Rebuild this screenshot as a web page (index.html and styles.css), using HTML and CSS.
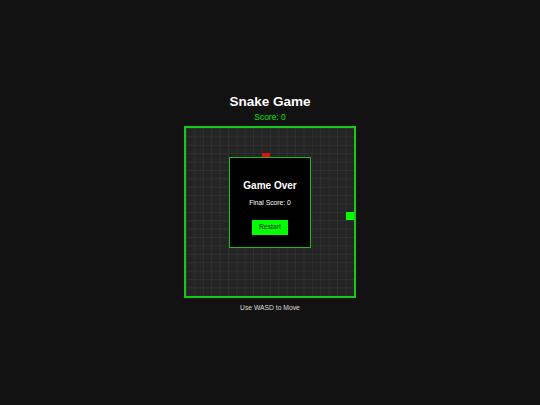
FILE: index.html
```html
<!DOCTYPE html>
<html>
<head>
<meta charset="utf-8">
<link rel="stylesheet" href="styles.css">
</head>
<body>
<div class="app">
  <h1 class="title">Snake Game</h1>
  <div class="score">Score: 0</div>
  <div class="board">
    <div class="cell food" style="left:75.6px;top:25.2px"></div>
    <div class="cell snake" style="left:159.6px;top:84px"></div>
    <div class="overlay">
      <h2 class="over-title">Game Over</h2>
      <p class="final">Final Score: 0</p>
      <button class="restart">Restart</button>
    </div>
  </div>
  <p class="hint">Use WASD to Move</p>
</div>
</body>
</html>
```
FILE: styles.css
```css
html, body {
  margin: 0;
  padding: 0;
  background: #121212;
  width: 540px;
  height: 405px;
  overflow: hidden;
}
.app {
  padding-top: 94px;
  display: flex;
  flex-direction: column;
  align-items: center;
  font-family: "Liberation Sans", Arial, sans-serif;
  color: #fff;
}
.title {
  margin: 0;
  font-size: 13.5px;
  line-height: 16px;
  font-weight: bold;
  color: #fff;
}
.score {
  margin-top: 2.4px;
  font-size: 8.44px;
  line-height: 10px;
  color: #00e600;
}
.board {
  position: relative;
  margin-top: 3.6px;
  width: 168px;
  height: 168px;
  border: 2px solid #18c818;
  background-color: #242424;
  background-image:
    linear-gradient(to right, #303030 1px, transparent 1px),
    linear-gradient(to bottom, #303030 1px, transparent 1px);
  background-size: 8.4px 8.4px;
}
.cell {
  position: absolute;
  width: 8.4px;
  height: 8.4px;
}
.food { background: #e01010; }
.snake { background: #00ff00; }
.overlay {
  position: absolute;
  left: 43px;
  top: 29px;
  width: 80px;
  box-sizing: content-box;
  border: 1px solid #1fb81f;
  background: #000;
  padding: 22.4px 0 12px;
  display: flex;
  flex-direction: column;
  align-items: center;
}
.over-title {
  margin: 0;
  font-size: 10px;
  line-height: 12px;
  font-weight: bold;
  color: #fff;
}
.final {
  margin: 7.1px 0 0;
  font-size: 6.75px;
  line-height: 8px;
  color: #fff;
}
.restart {
  margin-top: 12.5px;
  padding: 3.5px 7px;
  border: none;
  border-radius: 0;
  background: #00ff00;
  color: #111;
  font-family: "Liberation Sans", Arial, sans-serif;
  font-size: 6.75px;
  line-height: 8px;
}
.hint {
  margin: 6.3px 0 0;
  font-size: 6.75px;
  line-height: 8px;
  color: #ddd;
}
```
